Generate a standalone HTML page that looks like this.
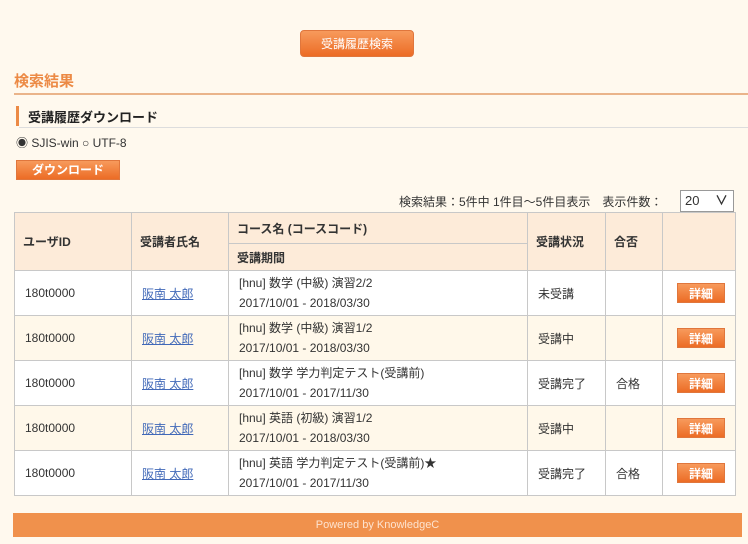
<!DOCTYPE html>
<html><head><meta charset="utf-8">
<style>
*{margin:0;padding:0;box-sizing:border-box}
body{width:748px;height:544px;background:#fff9ee;font-family:"Liberation Sans","Noto Sans CJK JP",sans-serif;font-size:12px;color:#333;position:relative;overflow:hidden}
.abs{position:absolute}
.btn{background:linear-gradient(#f79a5c,#ec6c25);color:#fff;text-align:center;border:1px solid #e0763c}
table{position:absolute;left:14px;top:212px;width:722px;border-collapse:collapse;background:#fff}
td,th{border:1px solid #c8c8c8;font-size:12px}
th{background:#fdebd9;text-align:left;padding-left:8px;font-weight:bold;color:#333}
td{padding-left:10px;height:45px}
tr.alt td{background:#fff8ea}
a{color:#4169b8;text-decoration:underline}
.det{display:inline-block;width:48px;height:20px;line-height:20px;font-size:12px;font-weight:bold;margin-left:14px}
.c2{line-height:20px}
</style></head><body>
<div class="abs btn" style="left:300px;top:30px;width:114px;height:27px;line-height:26px;border-radius:4px;font-size:12px">受講履歴検索</div>
<div class="abs" style="left:14px;top:70px;font-size:15px;font-weight:bold;color:#ec8a45">検索結果</div>
<div class="abs" style="left:14px;top:93px;width:734px;height:2px;background:#eab48a"></div>
<div class="abs" style="left:16px;top:106px;width:3px;height:20px;background:#ec8a45"></div>
<div class="abs" style="left:28px;top:107px;font-size:13px;font-weight:bold;color:#222">受講履歴ダウンロード</div>
<div class="abs" style="left:19px;top:127px;width:729px;height:1px;background:#ddd"></div>
<div class="abs" style="left:16px;top:134px;font-size:12px">◉ SJIS-win ○ UTF-8</div>
<div class="abs btn" style="left:16px;top:160px;width:104px;height:20px;line-height:19px;font-size:12px;font-weight:bold">ダウンロード</div>
<div class="abs" style="left:399px;top:193px;font-size:12px">検索結果：5件中 1件目～5件目表示　表示件数：</div>
<div class="abs" style="left:680px;top:190px;width:54px;height:22px;border:1px solid #999;background:#fff;font-size:13px;padding-left:4px;line-height:20px">20 <span style="float:right;margin-right:5px;font-weight:bold">&#8744;</span></div>
<table>
<tr style="height:31px"><th rowspan="2" style="width:117px">ユーザID</th><th rowspan="2" style="width:97px">受講者氏名</th><th style="width:299px">コース名 (コースコード)</th><th rowspan="2" style="width:78px">受講状況</th><th rowspan="2" style="width:57px">合否</th><th rowspan="2"></th></tr>
<tr style="height:27px"><th>受講期間</th></tr>
<tr><td>180t0000</td><td><a>阪南 太郎</a></td><td class="c2">[hnu] 数学 (中級) 演習2/2<br>2017/10/01 - 2018/03/30</td><td>未受講</td><td></td><td style="padding:0"><span class="det btn">詳細</span></td></tr>
<tr class="alt"><td>180t0000</td><td><a>阪南 太郎</a></td><td class="c2">[hnu] 数学 (中級) 演習1/2<br>2017/10/01 - 2018/03/30</td><td>受講中</td><td></td><td style="padding:0"><span class="det btn">詳細</span></td></tr>
<tr><td>180t0000</td><td><a>阪南 太郎</a></td><td class="c2">[hnu] 数学 学力判定テスト(受講前)<br>2017/10/01 - 2017/11/30</td><td>受講完了</td><td>合格</td><td style="padding:0"><span class="det btn">詳細</span></td></tr>
<tr class="alt"><td>180t0000</td><td><a>阪南 太郎</a></td><td class="c2">[hnu] 英語 (初級) 演習1/2<br>2017/10/01 - 2018/03/30</td><td>受講中</td><td></td><td style="padding:0"><span class="det btn">詳細</span></td></tr>
<tr><td>180t0000</td><td><a>阪南 太郎</a></td><td class="c2">[hnu] 英語 学力判定テスト(受講前)★<br>2017/10/01 - 2017/11/30</td><td>受講完了</td><td>合格</td><td style="padding:0"><span class="det btn">詳細</span></td></tr>
</table>
<div class="abs" style="left:13px;top:513px;width:729px;height:24px;background:#f0914c;color:#fde3cf;text-align:center;line-height:24px;font-size:11px">Powered by KnowledgeC</div>
</body></html>
